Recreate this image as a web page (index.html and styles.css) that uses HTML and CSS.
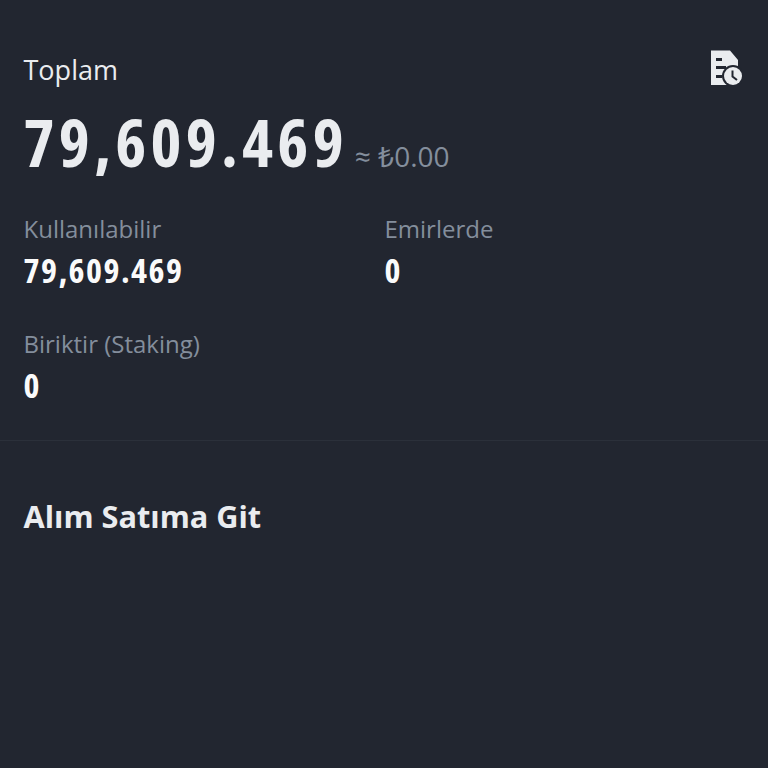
FILE: index.html
```html
<!DOCTYPE html>
<html lang="en">
<head>
    <meta charset="UTF-8">
    <meta name="viewport" content="width=device-width, initial-scale=1.0">
    <title>Toplam</title>
    <link rel="stylesheet" href="styles.css">
</head>
<body>
    <section class="summary">
        <div class="total-head">
            <span class="total-label">Toplam</span>
            <svg class="history-icon" width="32" height="36" viewBox="0 0 32 36">
                <path d="M1 0.5H20L28 10V22H18V35H1Z" fill="#EAECEF"/>
                <rect x="6" y="8" width="6" height="3" fill="#222630"/>
                <rect x="6" y="16" width="10" height="3" fill="#222630"/>
                <rect x="6" y="25" width="6" height="3" fill="#222630"/>
                <circle cx="23" cy="26" r="11" fill="#222630"/>
                <circle cx="23" cy="26" r="9" fill="#EAECEF"/>
                <path d="M22.5 20.5V26.5L27 30" fill="none" stroke="#222630" stroke-width="2"/>
            </svg>
        </div>
        <div class="total-row">
            <span class="total-value">79,609.469</span>
            <span class="total-fiat">≈ ₺0.00</span>
        </div>
        <div class="balances">
            <div class="balance">
                <div class="balance-label">Kullanılabilir</div>
                <div class="balance-value">79,609.469</div>
            </div>
            <div class="balance">
                <div class="balance-label">Emirlerde</div>
                <div class="balance-value">0</div>
            </div>
            <div class="balance">
                <div class="balance-label">Biriktir (Staking)</div>
                <div class="balance-value">0</div>
            </div>
        </div>
    </section>
    <section class="trade">
        <h2>Alım Satıma Git</h2>
    </section>
</body>
</html>
```

FILE: styles.css
```css
/* General Styling */
body {
    background-color: #222630;
    color: #EAECEF;
    font-family: 'Open Sans', sans-serif;
    margin: 0;
    padding: 0;
    min-height: 100vh;
    overflow: hidden;
}

.summary {
    padding: 50px 24px 35px 23.5px;
    border-bottom: 1px solid #2B303A;
}

.total-head {
    display: flex;
    justify-content: space-between;
    align-items: flex-start;
    height: 44px;
}

.total-label {
    font-size: 27px;
    line-height: 40px;
}

.history-icon {
    margin-right: 2px;
}

.total-row {
    display: flex;
    align-items: baseline;
    gap: 7px;
    height: 70px;
    margin-top: 12px;
}

.total-value {
    font-stretch: 75%;
    font-size: 66px;
    font-weight: 700;
    line-height: 70px;
    letter-spacing: 4.3px;
}

.total-fiat {
    font-size: 28px;
    color: #848E9C;
}

.balances {
    display: grid;
    grid-template-columns: 361px 1fr;
    row-gap: 37px;
    margin-top: 36px;
}

.balance-label {
    font-size: 24px;
    line-height: 34px;
    color: #848E9C;
}

.balance-value {
    font-stretch: 75%;
    font-size: 34px;
    font-weight: 700;
    line-height: 40px;
    margin-top: 4px;
    letter-spacing: 1.5px;
    color: #FAFAFA;
}

.trade {
    padding: 56px 24px 57px 23.5px;
}

.trade h2 {
    margin: 0;
    font-size: 30.7px;
    font-weight: 700;
    line-height: 38px;
}
```
